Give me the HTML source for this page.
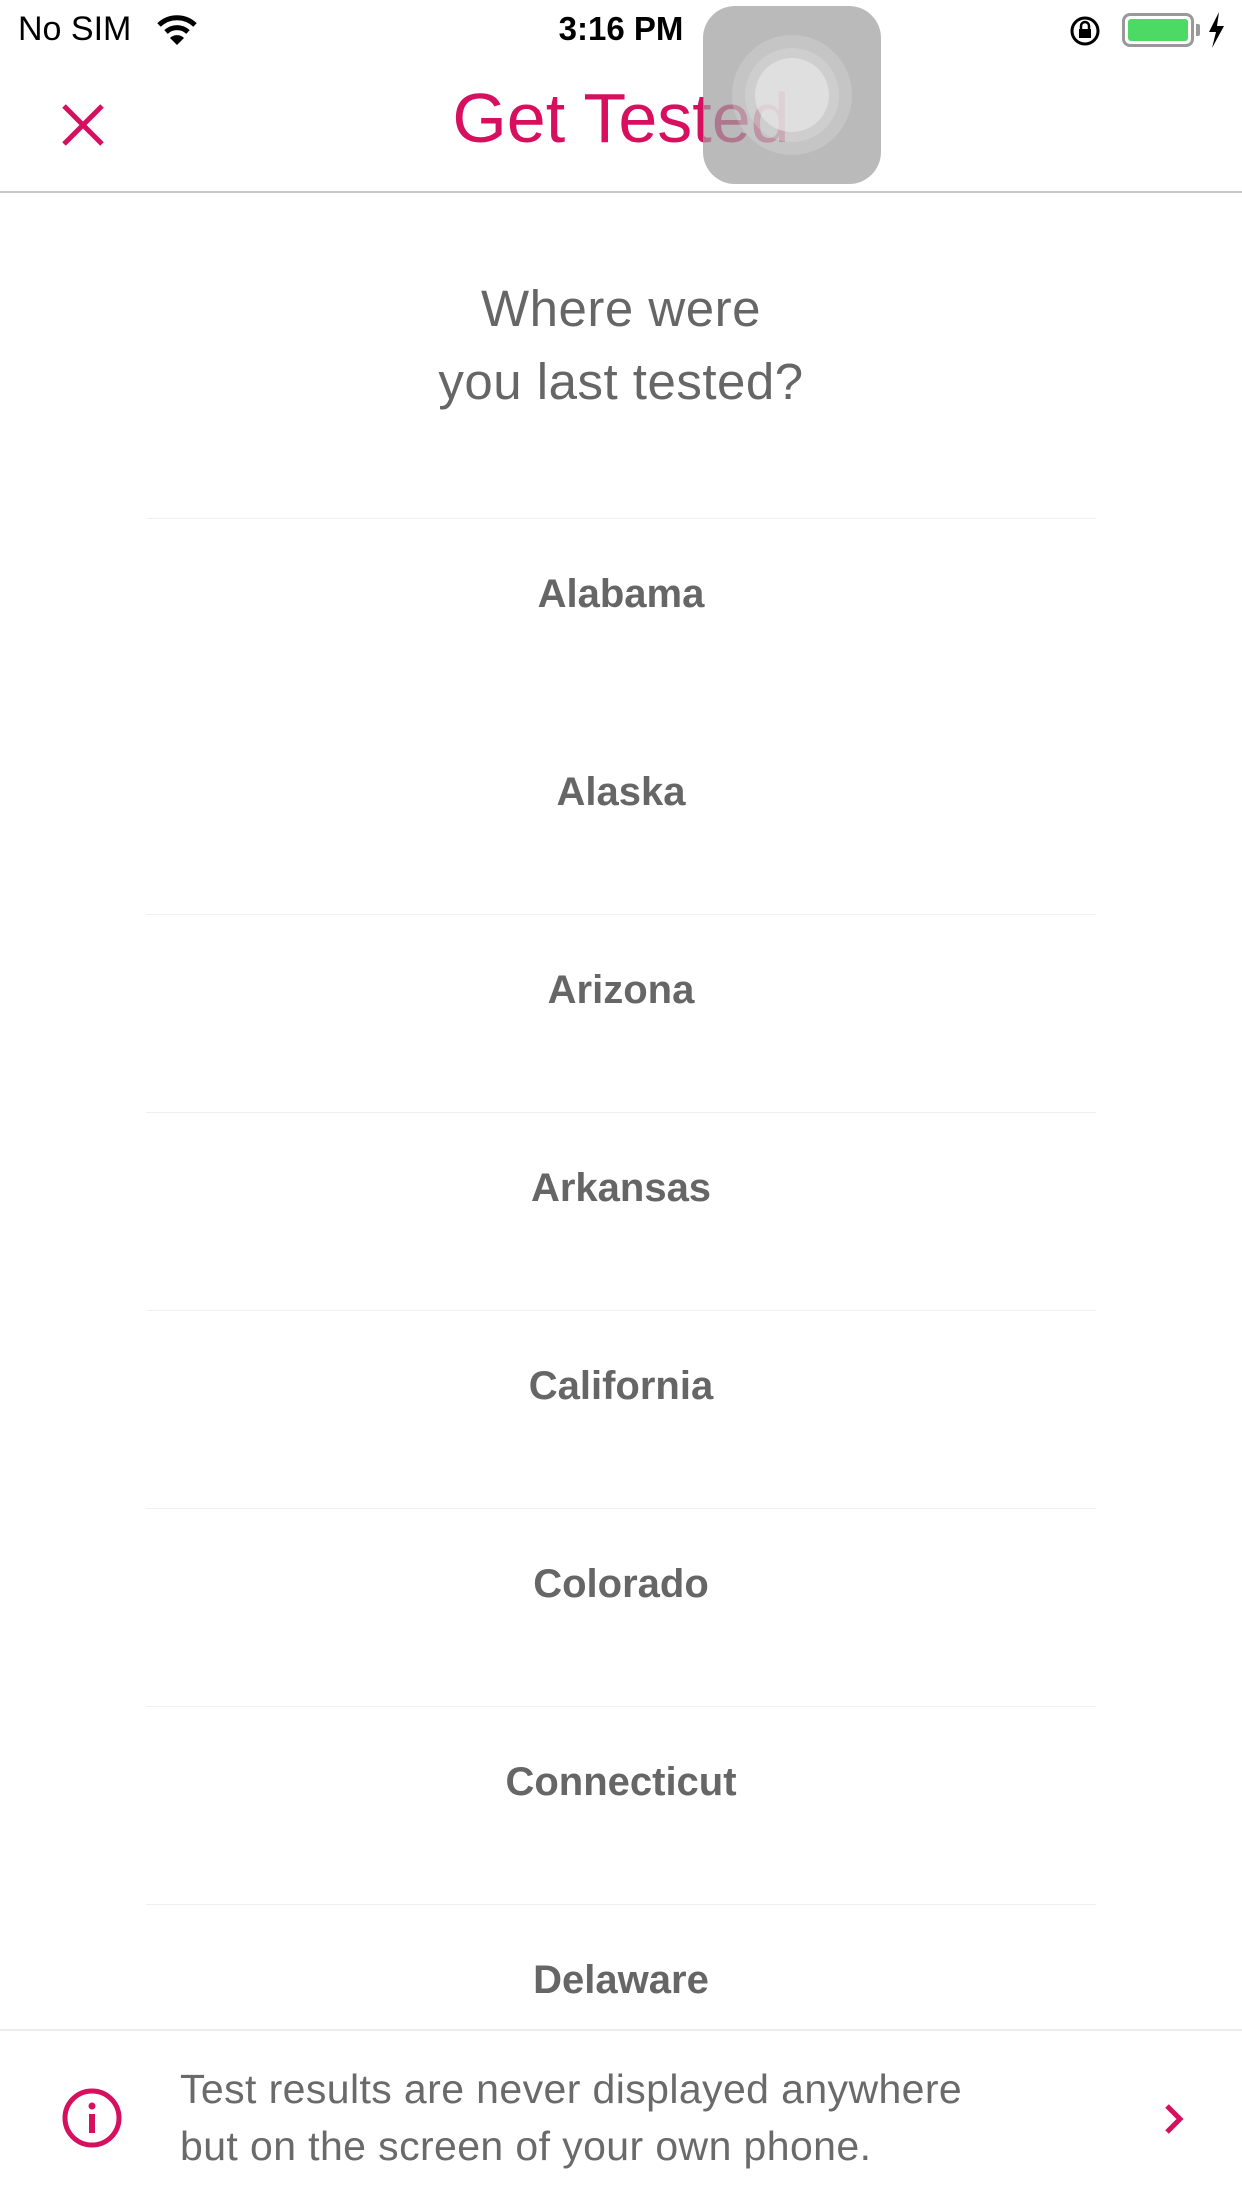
<!DOCTYPE html>
<html><head><meta charset="utf-8"><style>
*{margin:0;padding:0;box-sizing:border-box}
body{width:1242px;height:2208px;background:#fff;font-family:"Liberation Sans",sans-serif;position:relative;overflow:hidden}
.abs{position:absolute}
.sb{top:10px;font-size:34px;color:#000}
.hdr{top:191px;left:0;width:1242px;height:2px;background:#c8c8c8}
.title{top:78px;left:0;width:1242px;text-align:center;color:#d6105f;font-size:70px;letter-spacing:0px}
.q{top:272px;left:0;width:1242px;text-align:center;color:#666;font-size:51px;line-height:73px;letter-spacing:0.5px}
.sep{left:146px;width:950px;height:1px;background:#f0f0f0}
.item{left:0;width:1242px;text-align:center;color:#666;font-size:40px;font-weight:bold}
.foot{top:2029px;left:0;width:1242px;height:2px;background:#ececec}
.ft{left:180px;top:2061px;color:#6a6a6a;font-size:41px;line-height:57px;letter-spacing:0.4px}
</style></head><body>
<div class="abs sb" style="left:18px">No SIM</div>
<svg class="abs" style="left:156px;top:14px" width="42" height="32" viewBox="0 0 42 32"><path d="M3 11a26 26 0 0 1 36 0" stroke="#000" stroke-width="5" fill="none"/><path d="M10 18a16 16 0 0 1 22 0" stroke="#000" stroke-width="5" fill="none"/><path d="M21 31l-7-7a10 10 0 0 1 14 0z" fill="#000"/></svg>
<div class="abs sb" style="left:0;width:1242px;text-align:center;font-weight:bold;font-size:33px">3:16 PM</div>
<svg class="abs" style="left:1068px;top:14px" width="34" height="34" viewBox="0 0 34 34"><circle cx="17" cy="17" r="13" stroke="#000" stroke-width="3" fill="none"/><rect x="11" y="15" width="12" height="9" fill="#000"/><path d="M13 15v-3a4 4 0 0 1 8 0v3" stroke="#000" stroke-width="2.5" fill="none"/></svg>
<div class="abs" style="left:1122px;top:13px;width:72px;height:34px;border:3px solid #999;border-radius:8px;padding:3px"><div style="width:100%;height:100%;background:#4cd964;border-radius:3px"></div></div>
<div class="abs" style="left:1196px;top:24px;width:4px;height:12px;background:#999;border-radius:0 2px 2px 0"></div>
<svg class="abs" style="left:1206px;top:12px" width="20" height="36" viewBox="0 0 20 36"><path d="M13 0L3 20h7l-4 16 12-22h-7z" fill="#000"/></svg>
<svg class="abs" style="left:60px;top:102px" width="46" height="46" viewBox="0 0 46 46"><path d="M4 4L42 42M42 4L4 42" stroke="#d6105f" stroke-width="5"/></svg>
<div class="abs title">Get Tested</div>
<div class="abs" style="left:703px;top:6px;width:178px;height:178px;background:rgba(160,160,160,0.72);border-radius:32px"></div>
<div class="abs" style="left:732px;top:35px;width:120px;height:120px;border-radius:50%;background:rgba(230,230,230,0.25)"></div>
<div class="abs" style="left:745px;top:48px;width:94px;height:94px;border-radius:50%;background:rgba(230,230,230,0.3)"></div>
<div class="abs" style="left:755px;top:58px;width:74px;height:74px;border-radius:50%;background:rgba(235,235,235,0.6)"></div>
<div class="abs hdr"></div>
<div class="abs q">Where were<br>you last tested?</div>
<div class="abs sep" style="top:518px"></div>
<div class="abs item" style="top:572px">Alabama</div>
<div class="abs item" style="top:770px">Alaska</div>
<div class="abs sep" style="top:914px"></div>
<div class="abs item" style="top:968px">Arizona</div>
<div class="abs sep" style="top:1112px"></div>
<div class="abs item" style="top:1166px">Arkansas</div>
<div class="abs sep" style="top:1310px"></div>
<div class="abs item" style="top:1364px">California</div>
<div class="abs sep" style="top:1508px"></div>
<div class="abs item" style="top:1562px">Colorado</div>
<div class="abs sep" style="top:1706px"></div>
<div class="abs item" style="top:1760px">Connecticut</div>
<div class="abs sep" style="top:1904px"></div>
<div class="abs item" style="top:1958px">Delaware</div>
<div class="abs foot"></div>
<div class="abs" style="top:2031px;left:0;width:1242px;height:177px;background:#fff"></div>
<svg class="abs" style="left:60px;top:2086px" width="64" height="64" viewBox="0 0 64 64"><circle cx="32" cy="32" r="27" stroke="#d6105f" stroke-width="5" fill="none"/><rect x="29" y="28" width="6" height="19" fill="#d6105f"/><circle cx="32" cy="20" r="3.5" fill="#d6105f"/></svg>
<div class="abs ft">Test results are never displayed anywhere<br>but on the screen of your own phone.</div>
<svg class="abs" style="left:1162px;top:2102px" width="24" height="34" viewBox="0 0 24 34"><path d="M5 4l13 13L5 30" stroke="#d6105f" stroke-width="5" fill="none"/></svg>
</body></html>
